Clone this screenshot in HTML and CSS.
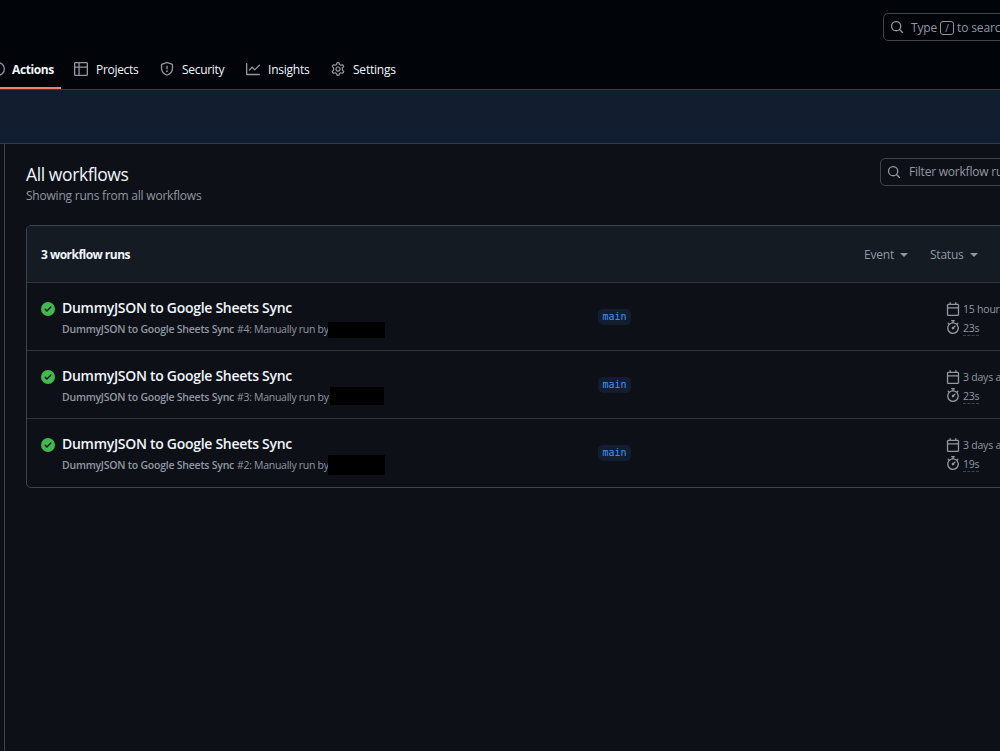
FILE: index.html
```
<!DOCTYPE html>
<html lang="en">
<head>
  <meta charset="UTF-8">
  <title>Workflow runs</title>
  <link rel="stylesheet" href="styles.css">
</head>
<body>
  <svg class="sprite" width="0" height="0">
    <symbol id="search" viewBox="0 0 16 16"><path d="M10.68 11.74a6 6 0 0 1-7.922-8.982 6 6 0 0 1 8.982 7.922l3.04 3.04a.749.749 0 0 1-.326 1.275.749.749 0 0 1-.734-.215ZM11.5 7a4.499 4.499 0 1 0-8.997 0A4.499 4.499 0 0 0 11.5 7Z"/></symbol>
    <symbol id="play" viewBox="0 0 16 16"><path d="M8 0a8 8 0 1 1 0 16A8 8 0 0 1 8 0ZM1.5 8a6.5 6.5 0 1 0 13 0 6.5 6.5 0 0 0-13 0Zm4.879-2.773 4.264 2.559a.25.25 0 0 1 0 .428l-4.264 2.559A.25.25 0 0 1 6 10.559V5.442a.25.25 0 0 1 .379-.215Z"/></symbol>
    <symbol id="table" viewBox="0 0 16 16"><path d="M0 1.75C0 .784.784 0 1.75 0h12.5C15.216 0 16 .784 16 1.75v12.5A1.75 1.75 0 0 1 14.25 16H1.75A1.75 1.75 0 0 1 0 14.25ZM6.5 6.5v8h7.75a.25.25 0 0 0 .25-.25V6.5Zm8-1.5V1.75a.25.25 0 0 0-.25-.25H6.5V5Zm-13 1.5v7.75c0 .138.112.25.25.25H5v-8ZM5 5V1.5H1.75a.25.25 0 0 0-.25.25V5Z"/></symbol>
    <symbol id="shield" viewBox="0 0 16 16"><path d="M7.467.133a1.748 1.748 0 0 1 1.066 0l5.25 1.68A1.75 1.75 0 0 1 15 3.48V7c0 1.566-.32 3.182-1.303 4.682-.983 1.498-2.585 2.813-5.032 3.855a1.697 1.697 0 0 1-1.33 0c-2.447-1.042-4.049-2.357-5.032-3.855C1.32 10.182 1 8.566 1 7V3.48a1.75 1.75 0 0 1 1.217-1.667Zm.61 1.429a.25.25 0 0 0-.153 0l-5.25 1.68a.25.25 0 0 0-.174.238V7c0 1.358.275 2.666 1.057 3.86.784 1.194 2.121 2.34 4.366 3.297a.196.196 0 0 0 .154 0c2.245-.956 3.582-2.104 4.366-3.298C13.225 9.666 13.5 8.36 13.5 7V3.48a.251.251 0 0 0-.174-.237l-5.25-1.68ZM8.75 4.75v3a.75.75 0 0 1-1.5 0v-3a.75.75 0 0 1 1.5 0ZM9 10.5a1 1 0 1 1-2 0 1 1 0 0 1 2 0Z"/></symbol>
    <symbol id="graph" viewBox="0 0 16 16"><path d="M1.5 1.75V13.5h13.75a.75.75 0 0 1 0 1.5H.75a.75.75 0 0 1-.75-.75V1.75a.75.75 0 0 1 1.5 0Zm14.28 2.53-5.25 5.25a.75.75 0 0 1-1.06 0L7 7.06 4.28 9.78a.751.751 0 0 1-1.042-.018.751.751 0 0 1-.018-1.042l3.25-3.25a.75.75 0 0 1 1.06 0L10 7.94l4.72-4.72a.751.751 0 0 1 1.042.018.751.751 0 0 1 .018 1.042Z"/></symbol>
    <symbol id="gear" viewBox="0 0 16 16"><path fill="none" stroke="currentColor" stroke-width="1.4" stroke-linejoin="round" d="M6.8.9Q8 .6 9.2.9L9.7 2.9 11.2 3.7 13.2 3.1Q14.1 3.9 14.5 5.2L13 6.8V9.2L14.5 10.8Q14.1 12.1 13.2 12.9L11.2 12.3 9.7 13.1 9.2 15.1Q8 15.4 6.8 15.1L6.3 13.1 4.8 12.3 2.8 12.9Q1.9 12.1 1.5 10.8L3 9.2V6.8L1.5 5.2Q1.9 3.9 2.8 3.1L4.8 3.7 6.3 2.9Z"/><circle cx="8" cy="8" r="2.3" fill="none" stroke="currentColor" stroke-width="1.4"/></symbol>
    <symbol id="check" viewBox="0 0 16 16"><path d="M8 16A8 8 0 1 1 8 0a8 8 0 0 1 0 16Zm3.78-9.72a.751.751 0 0 0-.018-1.042.751.751 0 0 0-1.042-.018L6.75 9.19 5.28 7.72a.751.751 0 0 0-1.042.018.751.751 0 0 0-.018 1.042l2 2a.75.75 0 0 0 1.06 0Z"/></symbol>
    <symbol id="calendar" viewBox="0 0 16 16"><path d="M4.75 0a.75.75 0 0 1 .75.75V2h5V.75a.75.75 0 0 1 1.5 0V2h1.25c.966 0 1.75.784 1.75 1.75v10.5A1.75 1.75 0 0 1 13.25 16H2.75A1.75 1.75 0 0 1 1 14.25V3.75C1 2.784 1.784 2 2.75 2H4V.75A.75.75 0 0 1 4.75 0ZM2.5 7.5v6.75c0 .138.112.25.25.25h10.5a.25.25 0 0 0 .25-.25V7.5Zm10.75-4H2.75a.25.25 0 0 0-.25.25V6h11V3.75a.25.25 0 0 0-.25-.25Z"/></symbol>
    <symbol id="stopwatch" viewBox="0 0 16 16"><path d="M5.75.75A.75.75 0 0 1 6.5 0h3a.75.75 0 0 1 0 1.5h-.75v1l-.001.041a6.724 6.724 0 0 1 3.464 1.435l.007-.006.75-.75a.749.749 0 0 1 1.275.326.749.749 0 0 1-.215.734l-.75.75-.006.007a6.75 6.75 0 1 1-10.548 0L2.72 5.03l-.75-.75a.751.751 0 0 1 .018-1.042.751.751 0 0 1 1.042-.018l.75.75.007.006A6.72 6.72 0 0 1 7.25 2.541V1.5H6.5a.75.75 0 0 1-.75-.75ZM8 14.5a5.25 5.25 0 1 0 0-10.5 5.25 5.25 0 0 0 0 10.5Zm.389-6.7 1.33-1.33a.75.75 0 1 1 1.061 1.06L9.45 8.861A1.503 1.503 0 0 1 8 10.75a1.499 1.499 0 1 1 .389-2.95Z"/></symbol>
  </svg>

  <header>
    <div class="topbar">
      <div class="search global">
        <svg class="icon"><use href="#search"/></svg>
        <span>Type</span><kbd>/</kbd><span>to search</span>
      </div>
    </div>
    <nav>
      <a class="tab active"><svg class="icon"><use href="#play"/></svg><span>Actions</span></a>
      <a class="tab projects"><svg class="icon"><use href="#table"/></svg><span>Projects</span></a>
      <a class="tab security"><svg class="icon"><use href="#shield"/></svg><span>Security</span></a>
      <a class="tab insights"><svg class="icon"><use href="#graph"/></svg><span>Insights</span></a>
      <a class="tab settings"><svg class="icon"><use href="#gear"/></svg><span>Settings</span></a>
    </nav>
  </header>
  <div class="banner"></div>

  <main>
    <div class="page-head">
      <div>
        <h2>All workflows</h2>
        <p>Showing runs from all workflows</p>
      </div>
      <div class="search filter">
        <svg class="icon"><use href="#search"/></svg>
        <span>Filter workflow runs</span>
      </div>
    </div>

    <div class="box">
      <div class="box-head">
        <strong>3 workflow runs</strong>
        <div class="menu event">Event</div>
        <div class="menu status">Status</div>
      </div>
      <div class="run">
        <svg class="icon check"><use href="#check"/></svg>
        <div class="info">
          <h3>DummyJSON to Google Sheets Sync</h3>
          <div class="sub"><b>DummyJSON to Google Sheets Sync</b><span class="by">#4: Manually run by</span><i class="mask"></i></div>
        </div>
        <div class="branch"><code>main</code></div>
        <div class="meta">
          <div><svg class="icon"><use href="#calendar"/></svg><span>15 hours ago</span></div>
          <div><svg class="icon"><use href="#stopwatch"/></svg><span class="time">23s</span></div>
        </div>
      </div>
      <div class="run">
        <svg class="icon check"><use href="#check"/></svg>
        <div class="info">
          <h3>DummyJSON to Google Sheets Sync</h3>
          <div class="sub"><b>DummyJSON to Google Sheets Sync</b><span class="by">#3: Manually run by</span><i class="mask narrow"></i></div>
        </div>
        <div class="branch"><code>main</code></div>
        <div class="meta">
          <div><svg class="icon"><use href="#calendar"/></svg><span>3 days ago</span></div>
          <div><svg class="icon"><use href="#stopwatch"/></svg><span class="time">23s</span></div>
        </div>
      </div>
      <div class="run">
        <svg class="icon check"><use href="#check"/></svg>
        <div class="info">
          <h3>DummyJSON to Google Sheets Sync</h3>
          <div class="sub"><b>DummyJSON to Google Sheets Sync</b><span class="by">#2: Manually run by</span><i class="mask tall"></i></div>
        </div>
        <div class="branch"><code>main</code></div>
        <div class="meta">
          <div><svg class="icon"><use href="#calendar"/></svg><span>3 days ago</span></div>
          <div><svg class="icon"><use href="#stopwatch"/></svg><span class="time">19s</span></div>
        </div>
      </div>
    </div>
  </main>
</body>
</html>
```
FILE: styles.css
```
* { box-sizing: border-box; }
body { margin: 0; height: 751px; overflow: hidden; display: flex; flex-direction: column; background: #0d1117; color: #f0f6fc; font: 12px/18px "Open Sans", "Noto Sans", sans-serif; letter-spacing: -0.22px; white-space: nowrap; }
.sprite { display: none; }
.icon { width: 14px; height: 14px; flex: none; fill: currentColor; color: #9198a1; }
h2, h3, p { margin: 0; }

header { height: 90px; flex: none; background: #010409; border-bottom: 1px solid #1c4272; }
.topbar { height: 48px; padding-top: 13px; }
.search { display: flex; align-items: center; height: 28px; width: 300px; padding-left: 6px; border: 1px solid #3d444d; border-radius: 5px; color: #9198a1; }
.global { margin-left: 883px; letter-spacing: -0.15px; }
.global span { padding-top: 1px; }
.global .icon { margin-right: 7px; }
kbd { width: 14px; height: 14px; margin: 1px 3px 0; border: 1px solid #9198a1; border-radius: 3px; font: 10px/12px "Open Sans", sans-serif; text-align: center; }
nav { display: flex; height: 42px; }
.tab { display: flex; align-items: center; gap: 8px; height: 41px; }
.tab span { padding-top: 2px; }
.active { width: 70px; margin-left: -9px; gap: 7px; font-weight: 700; letter-spacing: -0.4px; border-bottom: 2px solid #f78166; padding-top: 2px; }
.projects { margin-left: 13px; width: 86px; letter-spacing: -0.3px; }
.security { width: 86px; letter-spacing: -0.3px; }
.insights { width: 85px; }

.banner { height: 54px; flex: none; background: #121d2f; border-bottom: 1px solid #1c4272; }

main { flex: 1; margin-left: 4px; padding: 14px 0 0 21px; border-left: 1px solid #3d444d; }
.page-head { display: flex; justify-content: space-between; height: 67px; width: 1154px; }
.page-head h2 { margin-top: 5px; font-size: 17.5px; line-height: 22px; font-weight: 400; letter-spacing: -0.4px; }
.page-head p { margin-top: 1px; color: #9198a1; line-height: 20px; }
.filter .icon { margin-right: 8px; }

.box { width: 1155px; border: 1px solid #3d444d; border-radius: 5px; overflow: hidden; }
.box-head { display: flex; align-items: center; height: 56px; padding-left: 14px; background: #151b23; }
.box-head strong { width: 823px; font-weight: 700; letter-spacing: -0.53px; padding-top: 2px; }
.menu { display: flex; align-items: center; gap: 6px; width: 66px; padding-top: 1px; color: #9198a1; }
.menu::after { content: ""; border: 4px solid transparent; border-top-color: #9198a1; border-bottom: 0; }
.run { display: flex; height: 68px; padding-left: 14px; border-top: 1px solid #2f353d; }
.run:last-child { height: 69px; }
.check { margin: 19px 7px 0 0; color: #3fb950; }
.info { width: 536px; padding-top: 15px; }
.info h3 { font-size: 14px; line-height: 20px; font-weight: 600; letter-spacing: -0.29px; }
.sub { display: flex; height: 22px; font-size: 10.5px; line-height: 23px; color: #9198a1; }
.sub b { width: 175px; font-weight: 600; letter-spacing: -0.23px; }
.by { width: 91px; letter-spacing: -0.29px; }
.mask { width: 57px; height: 16px; margin-top: 4px; background: #000; }
.narrow { width: 54px; height: 18px; margin: 1px 0 0 2px; }
.tall { height: 20px; margin-top: 1px; }
.branch { width: 348px; padding-top: 26px; }
.branch code { display: block; width: 33px; height: 16px; border-radius: 5px; background: #121d2f; color: #4493f8; font: 10px/16px "DejaVu Sans Mono", monospace; letter-spacing: 0; text-align: center; }
.meta { padding-top: 17px; font-size: 10.5px; color: #9198a1; }
.meta div { display: flex; align-items: center; gap: 3px; height: 18px; }
.time { height: 16px; margin-top: 1px; line-height: 17px; border-bottom: 1px dashed #3d444d; }
```
